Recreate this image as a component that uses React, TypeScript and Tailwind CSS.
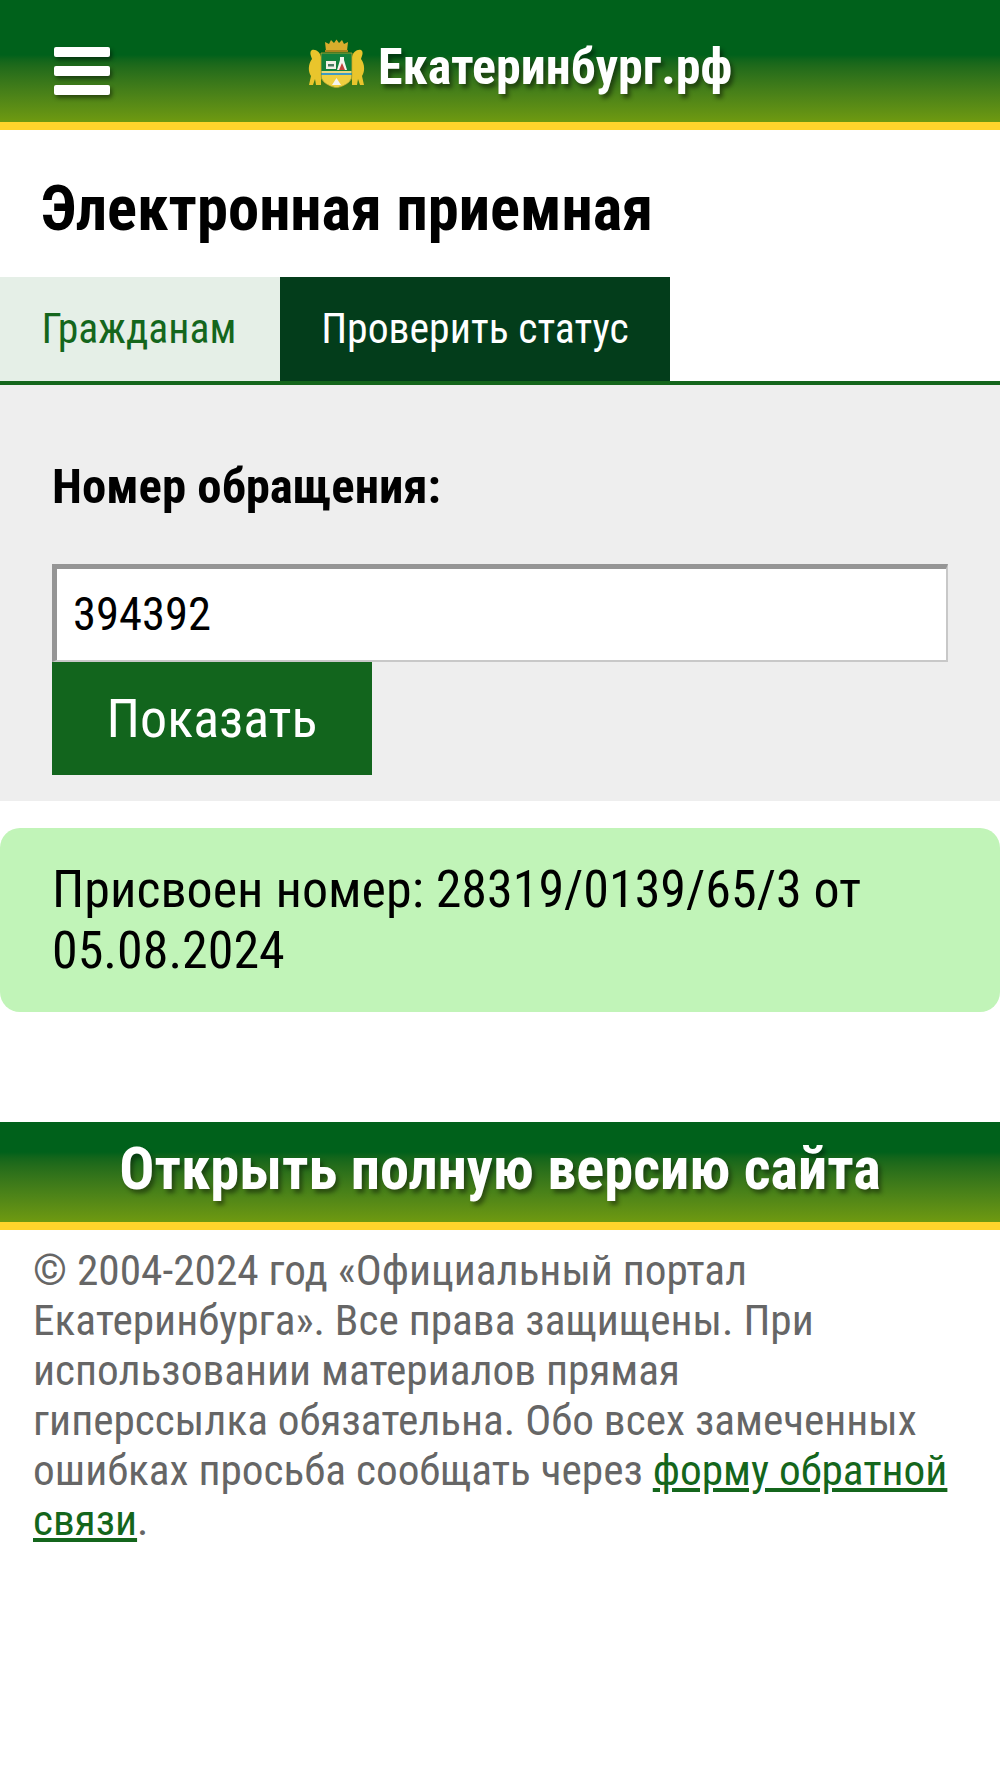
const font = "font-['Roboto',sans-serif] [font-stretch:75%]";

function Crest() {
  return (
    <svg width="59" height="49" viewBox="0 0 59 49" className="-mt-[7px] shrink-0">
      {/* crown */}
      <path d="M19 12 L18 3 L22 5 L24 1 L27 4 L29.5 0.5 L32 4 L35 1 L37 5 L41 3 L40 12 Z" fill="#d9ad2c" />
      <rect x="18" y="11" width="23" height="2" fill="#a9851e" />
      {/* lions */}
      <path d="M5 11 C2 13 4 17 5 20 C1 25 1 33 4 37 L2 46 L6 46 L8 40 L9 46 L14 46 L14 18 C13 13 9 10 5 11 Z" fill="#e9c52c" />
      <path d="M54 11 C57 13 55 17 54 20 C58 25 58 33 55 37 L57 46 L53 46 L51 40 L50 46 L45 46 L45 18 C46 13 50 10 54 11 Z" fill="#e9c52c" />
      {/* shield */}
      <path d="M14 14 H45 V37 C45 43 37 47 29.5 49 C22 47 14 43 14 37 Z" fill="#12803c" stroke="#c9a52a" strokeWidth="0.8" />
      <rect x="19" y="22" width="10" height="8" fill="#f1f1e8" />
      <rect x="21" y="25" width="6" height="2.5" fill="#4a7b62" />
      <path d="M33 18 H37 V21 L40 31 H30 L33 21 Z" fill="#f4f4ee" />
      <path d="M35 24 L38 31 H32 Z" fill="#c4453c" />
      <rect x="14.5" y="32" width="30" height="2" fill="#e9d97a" />
      <rect x="14.5" y="34" width="30" height="2" fill="#3f9bc4" />
      <path d="M14.5 36 H44.5 V37 C44.5 43 37 47 29.5 48.5 C22 47 14.5 43 14.5 37 Z" fill="#efcf40" />
      <path d="M29.5 39 L34 46 H25 Z" fill="#f4f4ee" />
    </svg>
  );
}

function App() {
  return (
    <div className={`${font} min-h-[1779px] bg-white text-black`}>
      <header className="border-b-[8px] border-[#ffd52b]">
        <div className="flex h-[122px] items-center bg-gradient-to-b from-[#00611b] via-[#00611b] via-45% to-[#6f9a10] pt-[20px] pl-[54px]">
          <div className="flex w-[56px] flex-col gap-[9px] drop-shadow-[2px_3px_2px_rgba(0,0,0,0.45)]">
            <div className="h-[10px] rounded-[2px] bg-white" />
            <div className="h-[10px] rounded-[2px] bg-white" />
            <div className="h-[10px] rounded-[2px] bg-white" />
          </div>
          <div className="-mt-[8px] ml-[197px] flex items-center gap-[12px]">
            <Crest />
            <span className="text-[50px] font-bold text-white [text-shadow:3px_4px_4px_rgba(0,0,0,0.45)]">
              Екатеринбург.рф
            </span>
          </div>
        </div>
      </header>

      <h1 className="pt-[44px] pr-[42px] pb-[33px] pl-[41px] text-[62.6px] leading-[70px] font-bold">
        Электронная приемная
      </h1>

      <div className="flex h-[108px] border-b-[4px] border-[#14661c] text-[41.7px]">
        <div className="flex w-[280px] items-center justify-center bg-[#e5efe7] pr-[2px] text-[#14661c]">Гражданам</div>
        <div className="flex w-[390px] items-center justify-center bg-[#033d1b] text-white">Проверить статус</div>
      </div>

      <section className="bg-[#eeeeee] px-[52px] pt-[75px] pb-[26px]">
        <div className="text-[48.8px] leading-[54px] font-bold">Номер обращения:</div>
        <div className="mt-[50px] flex h-[98px] items-center border-t-[5px] border-r-[2px] border-b-[2px] border-l-[5px] border-t-[#959595] border-r-[#c8c8c8] border-b-[#c8c8c8] border-l-[#959595] bg-white pl-[16px] text-[46.6px]">
          394392
        </div>
        <button className="block h-[113px] w-[320px] bg-[#12651d] text-[54px] text-white">Показать</button>
      </section>

      <div className="mt-[27px] rounded-[20px] bg-[#c1f4b8] px-[52px] py-[31px] text-[52px] leading-[61px]">
        Присвоен номер: 28319/0139/65/3 от 05.08.2024
      </div>

      <div className="mt-[110px] border-b-[8px] border-[#ffd52b]">
        <div className="flex h-[100px] items-center justify-center bg-gradient-to-b from-[#00611b] via-[#00611b] via-30% to-[#6f9a10] pb-[4px] text-[58.4px] font-bold text-white [text-shadow:3px_4px_4px_rgba(0,0,0,0.4)]">
          Открыть полную версию сайта
        </div>
      </div>

      <p className="pt-[16px] pr-[30px] pl-[33px] text-[43.3px] leading-[50px] text-[#666666]">
        © 2004-2024 год «Официальный портал Екатеринбурга». Все права защищены. При использовании материалов прямая
        <br />
        гиперссылка обязательна. Обо всех замеченных ошибках просьба сообщать через{" "}
        <a className="text-[#14661c] underline">форму обратной связи</a>.
      </p>
    </div>
  );
}

export default App;
